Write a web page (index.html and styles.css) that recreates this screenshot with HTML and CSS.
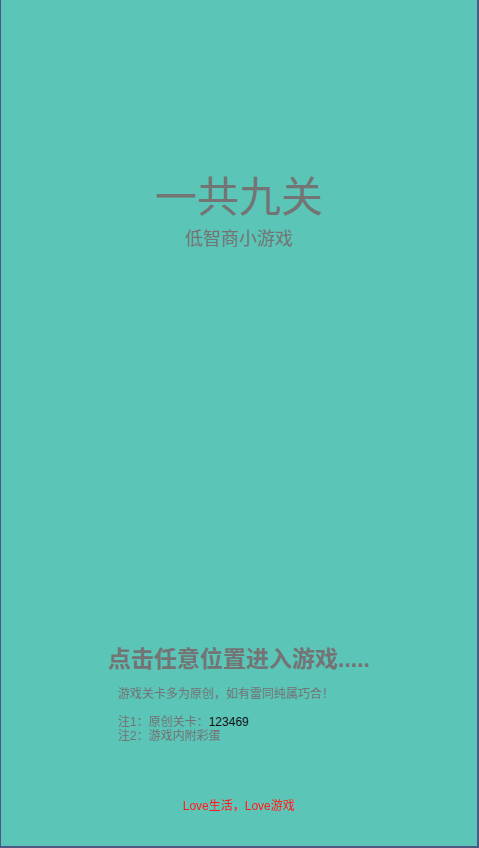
FILE: index.html
```html
<!DOCTYPE html>
<html lang="zh">
<head>
<meta charset="utf-8">
<link rel="stylesheet" href="styles.css">
</head>
<body>
<div class="panel">
  <h1 class="title">一共九关</h1>
  <div class="subtitle">低智商小游戏</div>
  <div class="start">点击任意位置进入游戏.....</div>
  <p class="desc">游戏关卡多为原创，如有雷同纯属巧合！</p>
  <div class="notes">
    <div class="note">注1：原创关卡：<span class="num">123469</span></div>
    <div class="note">注2：游戏内附彩蛋</div>
  </div>
  <div class="footer">Love生活，Love游戏</div>
</div>
</body>
</html>
```
FILE: styles.css
```css
html, body {
  margin: 0;
  padding: 0;
  height: 100%;
}
body {
  background: #4b5a82;
  font-family: "Liberation Sans", "Noto Sans CJK SC", sans-serif;
  color: #747474;
  overflow: hidden;
}
.panel {
  margin: 0 2px 0 1px;
  height: 846px;
  background: #5bc5b8;
  padding-top: 174px;
  box-sizing: border-box;
}
.title {
  margin: 0;
  font-size: 42px;
  line-height: 48px;
  font-weight: normal;
  text-align: center;
}
.subtitle {
  margin-top: 6px;
  font-size: 18px;
  line-height: 22px;
  text-align: center;
}
.start {
  margin-top: 395px;
  font-size: 23px;
  line-height: 28px;
  font-weight: bold;
  text-align: center;
}
.desc {
  margin: 13px 0 0 117px;
  font-size: 12px;
  line-height: 16px;
}
.notes {
  margin: 13px 0 0 117px;
  font-size: 12px;
  line-height: 14px;
}
.note {
  height: 14px;
}
.num {
  color: #111;
}
.footer {
  margin-top: 55px;
  font-size: 12px;
  line-height: 16px;
  color: #ff1a1a;
  text-align: center;
}
```
